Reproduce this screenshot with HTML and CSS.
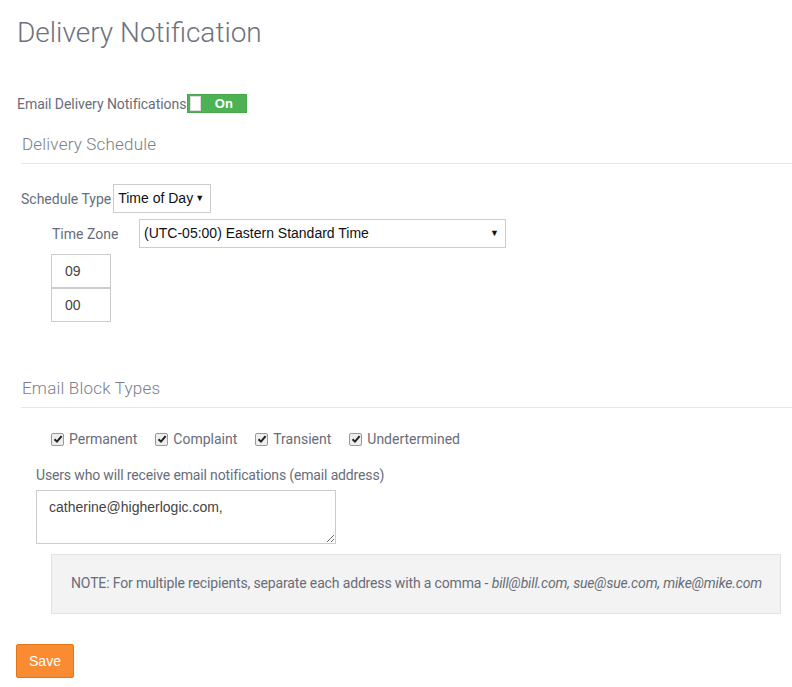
FILE: index.html
```html
<!DOCTYPE html>
<html lang="en">
<head>
<meta charset="UTF-8">
<title>Delivery Notification</title>
<link rel="stylesheet" href="styles.css">
</head>
<body>
<div class="page">
    <h1 class="page-title">Delivery Notification</h1>

    <!-- On/off switch -->
    <div class="toggle-row">
        <span class="toggle-label">Email Delivery Notifications</span>
        <span class="toggle"><span class="toggle-knob"></span><span class="toggle-text">On</span></span>
    </div>

    <!-- Schedule -->
    <div class="section">
        <h2 class="section-title">Delivery Schedule</h2>
        <div class="schedule-row">
            <span class="field-label">Schedule Type</span>
            <span class="fake-select type-select">Time of Day</span>
        </div>
        <div class="zone-row">
            <span class="field-label zone-label">Time Zone</span>
            <span class="fake-select zone-select">(UTC-05:00) Eastern Standard Time</span>
        </div>
        <div class="time-inputs">
            <input class="time-input" type="text" value="09">
            <input class="time-input" type="text" value="00">
        </div>
    </div>

    <!-- Block types -->
    <div class="section blocks">
        <h2 class="section-title">Email Block Types</h2>
        <div class="check-row">
            <label class="check"><span class="box"><svg width="10" height="10" viewBox="0 0 10 10"><path d="M1.5 5.2 L4 7.6 L8.6 2.2" fill="none" stroke="#222" stroke-width="2"/></svg></span>Permanent</label>
            <label class="check"><span class="box"><svg width="10" height="10" viewBox="0 0 10 10"><path d="M1.5 5.2 L4 7.6 L8.6 2.2" fill="none" stroke="#222" stroke-width="2"/></svg></span>Complaint</label>
            <label class="check"><span class="box"><svg width="10" height="10" viewBox="0 0 10 10"><path d="M1.5 5.2 L4 7.6 L8.6 2.2" fill="none" stroke="#222" stroke-width="2"/></svg></span>Transient</label>
            <label class="check"><span class="box"><svg width="10" height="10" viewBox="0 0 10 10"><path d="M1.5 5.2 L4 7.6 L8.6 2.2" fill="none" stroke="#222" stroke-width="2"/></svg></span>Undertermined</label>
        </div>
        <div class="recipients">
            <div class="recipients-label">Users who will receive email notifications (email address)</div>
            <textarea class="recipients-box">catherine@higherlogic.com,</textarea>
        </div>
        <div class="note">
            NOTE: For multiple recipients, separate each address with a comma - <em>bill@bill.com, sue@sue.com, mike@mike.com</em>
        </div>
    </div>

    <button class="save-btn">Save</button>
</div>
</body>
</html>
```

FILE: styles.css
```css
/* Page */
body {
    margin: 0;
    background: #fff;
    color: #686d79;
    font-family: Roboto, "Liberation Sans", sans-serif;
}
.page {
    padding-left: 16px;
}
.page-title {
    margin: 16px 0 0 1px;
    font-size: 28px;
    font-weight: 300;
    line-height: 34px;
    color: #6d727e;
}

/* Toggle */
.toggle-row {
    display: flex;
    align-items: center;
    margin: 44px 0 0 1px;
    height: 19px;
}
.toggle-label {
    font-size: 14px;
    letter-spacing: -0.05px;
    margin-right: 1px;
}
.toggle {
    display: flex;
    align-items: center;
    width: 60px;
    height: 19px;
    box-sizing: border-box;
    background: #4cb254;
    border: 1px solid #45a84d;
}
.toggle-knob {
    width: 9px;
    height: 13px;
    margin-left: 2px;
    background: #fff;
    border: 1px solid #ddd;
}
.toggle-text {
    flex: 1;
    text-align: center;
    color: #fff;
    font-weight: bold;
    font-size: 13px;
    font-family: "Liberation Sans", Arial, sans-serif;
}

/* Sections */
.section {
    margin-left: 5px;
}
.section-title {
    margin: 20px 0 0 0;
    padding: 0 0 8px 1px;
    font-size: 17px;
    font-weight: 300;
    line-height: 22px;
    letter-spacing: 0.2px;
    color: #7a7e89;
    border-bottom: 1px solid #e6e6e6;
}
.field-label {
    font-size: 14px;
}
.schedule-row {
    display: flex;
    align-items: center;
    margin-top: 20px;
}
.schedule-row .field-label {
    margin-right: 2px;
}
.fake-select {
    position: relative;
    display: block;
    box-sizing: border-box;
    height: 29px;
    line-height: 27px;
    border: 1px solid #ccc;
    padding-left: 4px;
    font-family: "Liberation Sans", Arial, sans-serif;
    font-size: 14px;
    color: #111;
}
.fake-select::after {
    content: "\25BC";
    position: absolute;
    right: 6px;
    top: 0;
    font-size: 9px;
}
.type-select {
    width: 98px;
}
.zone-row {
    display: flex;
    align-items: center;
    margin: 6px 0 0 31px;
}
.zone-label {
    width: 87px;
}
.zone-select {
    width: 367px;
}
.time-inputs {
    display: flex;
    flex-direction: column;
    margin: 6px 0 0 30px;
}
.time-input {
    box-sizing: border-box;
    width: 60px;
    height: 34px;
    margin: 0;
    padding: 0 0 0 13px;
    border: 1px solid #ccc;
    font-family: "Liberation Sans", Arial, sans-serif;
    font-size: 14px;
    color: #444;
}

/* Block types */
.blocks .section-title {
    margin-top: 55px;
}
.check-row {
    display: flex;
    margin: 23px 0 0 30px;
    font-size: 14px;
}
.check {
    display: flex;
    align-items: center;
    margin-right: 18px;
}
.box {
    display: flex;
    align-items: center;
    justify-content: center;
    width: 11px;
    height: 11px;
    margin-right: 5px;
    border: 1px solid #999;
    border-radius: 2px;
    background: #eee;
}
.recipients {
    margin: 20px 0 0 15px;
}
.recipients-label {
    font-size: 14px;
    letter-spacing: -0.15px;
}
.recipients-box {
    display: block;
    box-sizing: border-box;
    width: 300px;
    height: 54px;
    margin-top: 7px;
    padding: 8px 12px;
    border: 1px solid #ccc;
    font-family: "Liberation Sans", Arial, sans-serif;
    font-size: 14px;
    color: #444;
}
.note {
    box-sizing: border-box;
    width: 730px;
    height: 60px;
    margin: 10px 0 0 30px;
    padding: 20px 0 0 19px;
    background: #f3f3f3;
    border: 1px solid #e2e2e2;
    font-size: 14px;
    letter-spacing: -0.15px;
}

/* Save */
.save-btn {
    margin-top: 30px;
    width: 58px;
    height: 34px;
    background: #f98b32;
    border: 1px solid #e27616;
    border-radius: 2px;
    color: #fff;
    font-family: "Liberation Sans", Arial, sans-serif;
    font-size: 14px;
    cursor: pointer;
}
```
